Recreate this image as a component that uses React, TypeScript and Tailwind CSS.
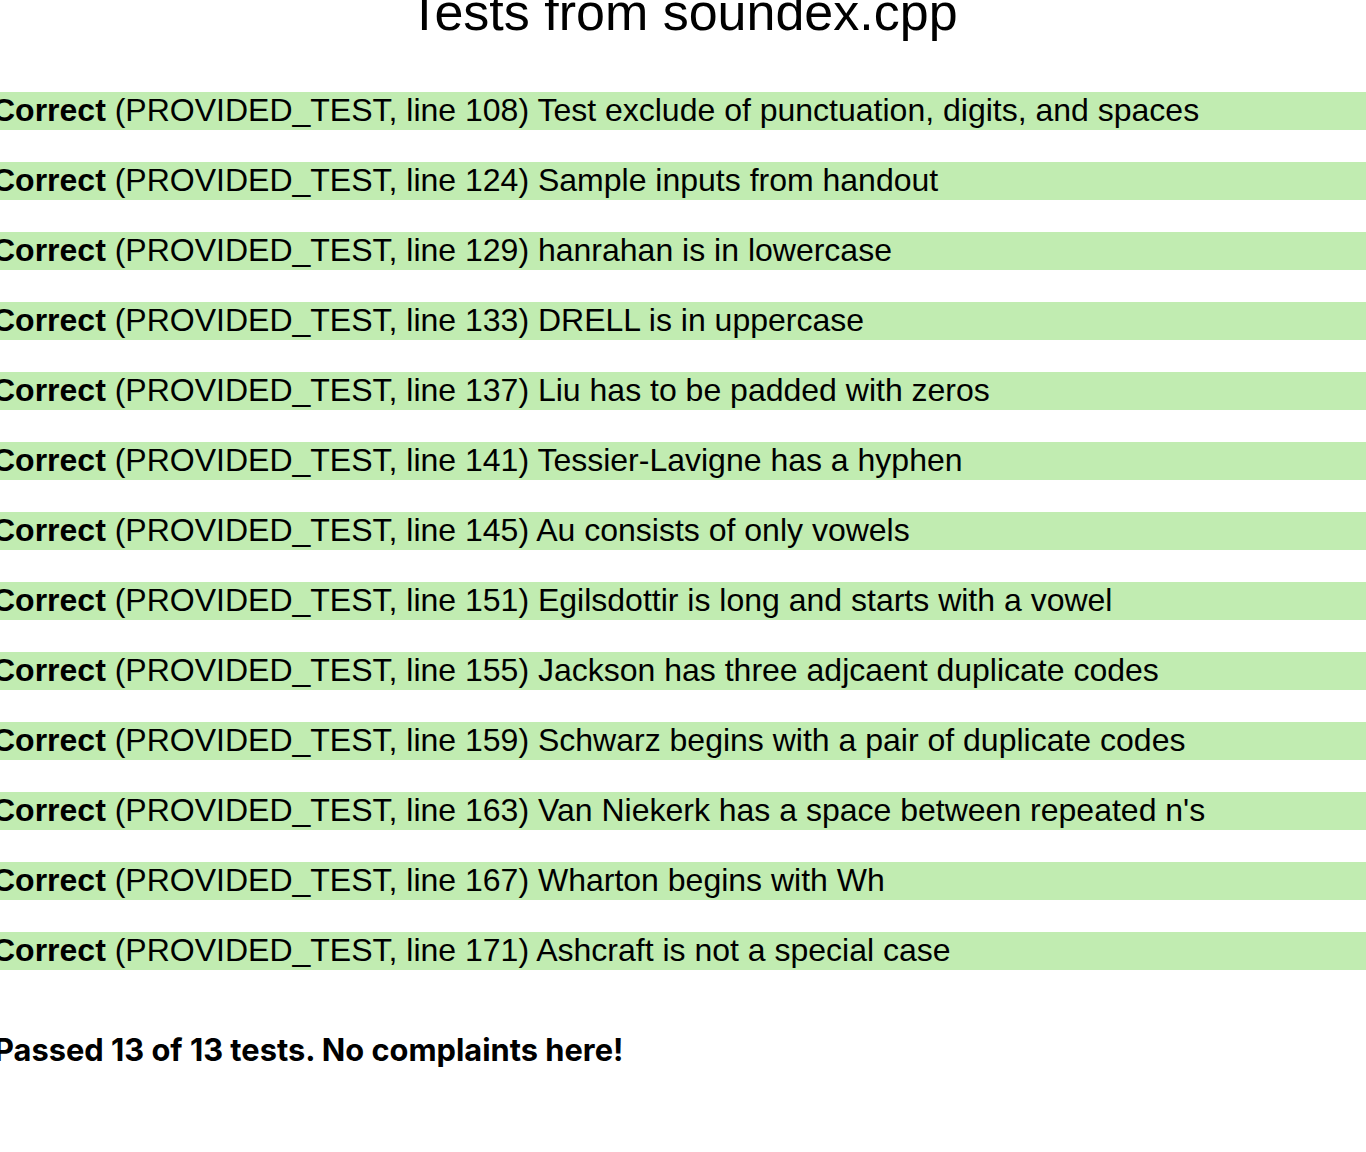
const tests = [
  { line: 108, name: "Test exclude of punctuation, digits, and spaces" },
  { line: 124, name: "Sample inputs from handout" },
  { line: 129, name: "hanrahan is in lowercase" },
  { line: 133, name: "DRELL is in uppercase" },
  { line: 137, name: "Liu has to be padded with zeros" },
  { line: 141, name: "Tessier-Lavigne has a hyphen" },
  { line: 145, name: "Au consists of only vowels" },
  { line: 151, name: "Egilsdottir is long and starts with a vowel" },
  { line: 155, name: "Jackson has three adjcaent duplicate codes" },
  { line: 159, name: "Schwarz begins with a pair of duplicate codes" },
  { line: 163, name: "Van Niekerk has a space between repeated n's" },
  { line: 167, name: "Wharton begins with Wh" },
  { line: 171, name: "Ashcraft is not a special case" },
]

export default function App() {
  return (
    <div className="w-[1366px] h-[1152px] overflow-hidden bg-white text-black font-['Liberation_Sans',Arial,sans-serif]">
      <h1 className="-mt-[17px] text-center text-[52px] leading-[58px] font-normal">Tests from soundex.cpp</h1>

      <div className="mt-[51px] flex flex-col gap-[32px]">
        {tests.map((t) => (
          <div key={t.line} className="h-[38px] bg-[#c1ecb1] text-[32px] leading-[37px] whitespace-nowrap">
            <div className="-ml-[8px]">
              <b>Correct</b> (PROVIDED_TEST, line {t.line}) {t.name}
            </div>
          </div>
        ))}
      </div>

      <p className="mt-[61px] -ml-[6px] text-[30.8px] leading-[38px] font-bold font-['Inter',sans-serif]">
        Passed 13 of 13 tests. No complaints here!
      </p>
    </div>
  )
}
